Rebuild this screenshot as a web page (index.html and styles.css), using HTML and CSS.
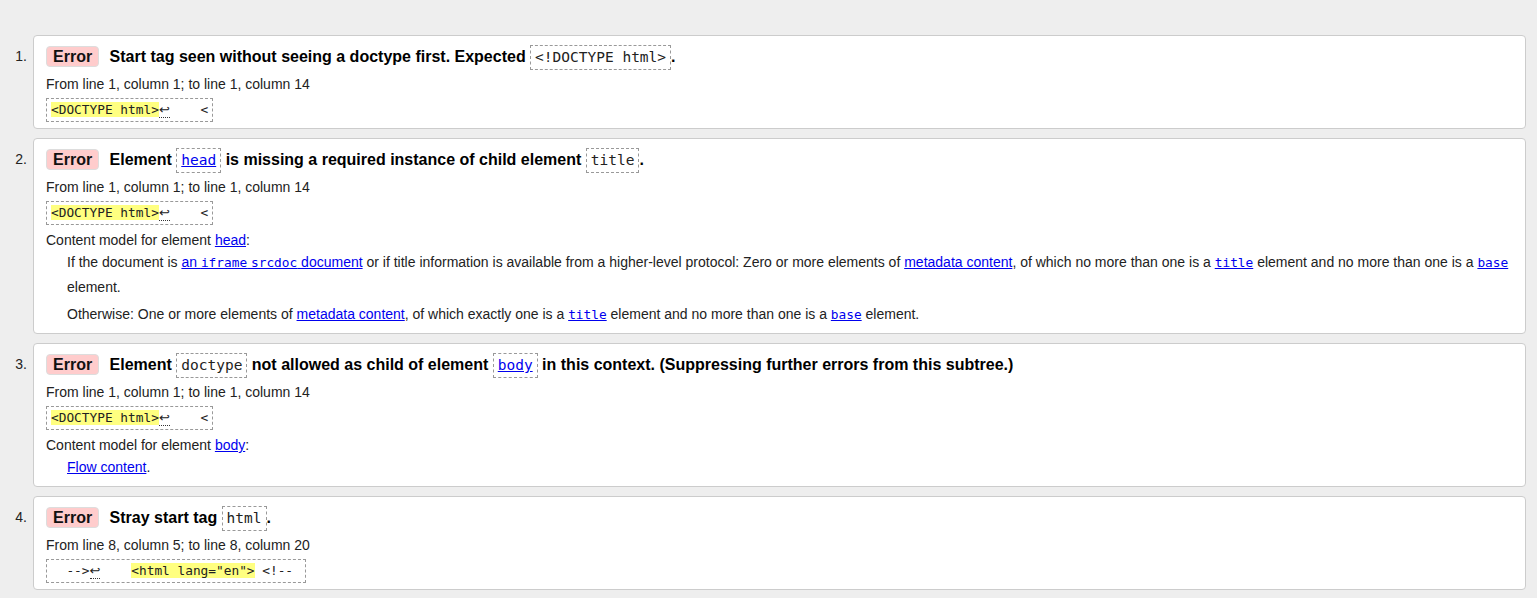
FILE: index.html
```html
<!DOCTYPE html>
<html lang="en">
<head>
<meta charset="utf-8">
<title>Validation results</title>
<link rel="stylesheet" href="styles.css">
</head>
<body>
<ol class="results">
  <li class="item">
    <span class="num">1.</span>
    <div class="card">
      <p class="msg"><span class="badge">Error</span> Start tag seen without seeing a doctype first. Expected <code class="tc">&lt;!DOCTYPE html&gt;</code>.</p>
      <p class="loc">From line 1, column 1; to line 1, column 14</p>
      <div class="extract"><code class="ex"><mark>&lt;DOCTYPE html&gt;</mark><span class="lf">↩</span>    &lt;</code></div>
    </div>
  </li>
  <li class="item">
    <span class="num">2.</span>
    <div class="card">
      <p class="msg"><span class="badge">Error</span> Element <code class="tc"><a href="#">head</a></code> is missing a required instance of child element <code class="tc">title</code>.</p>
      <p class="loc">From line 1, column 1; to line 1, column 14</p>
      <div class="extract"><code class="ex"><mark>&lt;DOCTYPE html&gt;</mark><span class="lf">↩</span>    &lt;</code></div>
      <dl class="cm">
        <dt>Content model for element <a href="#">head</a>:</dt>
        <dd>
          <p>If the document is <a href="#">an <code class="ic">iframe</code> <code class="ic">srcdoc</code> document</a> or if title information is available from a higher-level protocol: Zero or more elements of <a href="#">metadata content</a>, of which no more than one is a <a href="#"><code class="ic">title</code></a> element and no more than one is a <a href="#"><code class="ic">base</code></a> element.</p>
          <p>Otherwise: One or more elements of <a href="#">metadata content</a>, of which exactly one is a <a href="#"><code class="ic">title</code></a> element and no more than one is a <a href="#"><code class="ic">base</code></a> element.</p>
        </dd>
      </dl>
    </div>
  </li>
  <li class="item">
    <span class="num">3.</span>
    <div class="card">
      <p class="msg"><span class="badge">Error</span> Element <code class="tc">doctype</code> not allowed as child of element <code class="tc"><a href="#">body</a></code> in this context. (Suppressing further errors from this subtree.)</p>
      <p class="loc">From line 1, column 1; to line 1, column 14</p>
      <div class="extract"><code class="ex"><mark>&lt;DOCTYPE html&gt;</mark><span class="lf">↩</span>    &lt;</code></div>
      <dl class="cm">
        <dt>Content model for element <a href="#">body</a>:</dt>
        <dd>
          <p><a href="#">Flow content</a>.</p>
        </dd>
      </dl>
    </div>
  </li>
  <li class="item">
    <span class="num">4.</span>
    <div class="card">
      <p class="msg"><span class="badge">Error</span> Stray start tag <code class="tc">html</code>.</p>
      <p class="loc">From line 8, column 5; to line 8, column 20</p>
      <div class="extract"><code class="ex">  --&gt;<span class="lf">↩</span>    <mark>&lt;html lang="en"&gt;</mark> &lt;!-- </code></div>
    </div>
  </li>
</ol>
</body>
</html>
```

FILE: styles.css
```css
html, body {
  margin: 0;
  padding: 0;
}

body {
  background: #eeeeee;
  font-family: "Liberation Sans", Arial, sans-serif;
  font-size: 14px;
  color: #222222;
}

.results {
  list-style: none;
  margin: 35px 11px 0 0;
  padding: 0;
}

.item {
  display: flex;
  align-items: flex-start;
  margin-bottom: 9px;
}

.num {
  flex: none;
  width: 27px;
  margin-right: 6px;
  padding-top: 8px;
  text-align: right;
  font-size: 14px;
  line-height: 27px;
  color: #222222;
}

.card {
  flex: 1;
  min-width: 0;
  background: #ffffff;
  border: 1px solid #cccccc;
  border-radius: 4px;
  padding: 7px 12px 6px;
}

.msg {
  margin: 0;
  font-size: 16px;
  font-weight: bold;
  line-height: 27px;
  color: #000000;
}

.badge {
  display: inline-block;
  height: 21px;
  line-height: 20px;
  padding: 0 6px 0 6px;
  margin-right: 6px;
  background: #ffcccc;
  border: 1px solid #dddddd;
  border-radius: 4px;
  box-sizing: border-box;
  font-weight: bold;
  font-size: 16px;
  color: #111111;
}

.tc {
  display: inline-block;
  border: 1px dashed #999999;
  padding: 2px 4px;
  font-family: "DejaVu Sans Mono", "Liberation Mono", monospace;
  font-size: 14.5px;
  line-height: 19px;
  font-weight: normal;
  color: #222222;
}

a {
  color: #0000ee;
  text-decoration: underline;
}

.loc {
  margin: 6px 0 0;
  line-height: 16px;
}

.extract {
  display: flex;
  margin-top: 6px;
}

.ex {
  border: 1px dashed #999999;
  padding: 1px 4px;
  font-family: "DejaVu Sans Mono", "Liberation Mono", monospace;
  font-size: 12.8px;
  line-height: 20px;
  white-space: pre;
  color: #222222;
}

.ex mark {
  background: #ffff80;
  color: #222222;
}

.lf {
  font-family: "DejaVu Sans", sans-serif;
  font-size: 13px;
  border-bottom: 1px dotted #333333;
}

.cm {
  margin: 7px 0 0;
}

.cm dt {
  line-height: 16px;
}

.cm dd {
  margin: 2px 0 0 21px;
}

.cm dd p {
  margin: 0;
  line-height: 25px;
}

.cm dd p + p {
  margin-top: 2px;
}

.ic {
  font-family: "DejaVu Sans Mono", "Liberation Mono", monospace;
  font-size: 12.8px;
}
```
